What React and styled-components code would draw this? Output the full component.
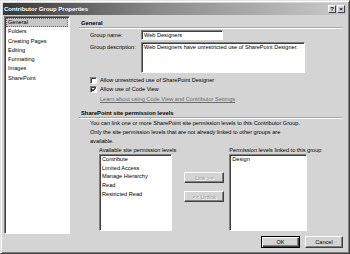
import React from 'react';
import styled, { createGlobalStyle } from 'styled-components';

const Global = createGlobalStyle`
  html, body { margin: 0; padding: 0; background: #d4d4d4; }
  body { font-family: "Liberation Sans", Arial, sans-serif; font-size: 5.6px; color: #000; }
  * { box-sizing: border-box; }
`;

const Window = styled.div`
  width: 350px;
  height: 254px;
  background: #d4d4d4;
  border: 1px solid;
  border-color: #e4e4e4 #404040 #404040 #e4e4e4;
  box-shadow: inset 1px 1px 0 #fff, inset -1px -1px 0 #808080;
  padding: 2px;
  display: flex;
  flex-direction: column;
  overflow: hidden;
`;

const TitleBar = styled.div`
  height: 12px;
  background: linear-gradient(to right, #383838 0%, #8a8a8a 45%, #cacaca 100%);
  display: flex;
  align-items: center;
  padding: 0 2px 0 1px;
  flex-shrink: 0;
`;

const Title = styled.div`
  flex: 1;
  color: #fff;
  font-weight: bold;
  font-size: 6px;
  line-height: 12px;
  white-space: nowrap;
`;

const CapButton = styled.div`
  width: 8px;
  height: 8px;
  margin-left: ${p => (p.$gap ? '1px' : '0')};
  background: #d4d4d4;
  border: 1px solid;
  border-color: #fff #404040 #404040 #fff;
  display: flex;
  align-items: center;
  justify-content: center;
  font-weight: bold;
  font-size: 6px;
  line-height: 6px;
`;

const Body = styled.div`
  display: flex;
  flex: 1;
  padding: 1px 0 0 1px;
  min-height: 0;
`;

const Nav = styled.div`
  width: 66px;
  height: 218px;
  background: #fff;
  border: 1px solid;
  border-color: #808080 #fff #fff #808080;
  box-shadow: inset 1px 1px 0 #404040;
  padding: 1px 1px 0 1px;
  flex-shrink: 0;
`;

const NavItem = styled.div`
  height: 9.3px;
  line-height: 9.3px;
  padding-left: 2px;
  white-space: nowrap;
  background: ${p => (p.$selected ? '#c6c6c6' : 'transparent')};
  outline: ${p => (p.$selected ? '1px dotted #666' : 'none')};
  outline-offset: -1px;
`;

const Panel = styled.div`
  flex: 1;
  margin-left: 9px;
  margin-right: 4px;
  display: flex;
  flex-direction: column;
`;

const Heading = styled.div`
  font-weight: bold;
  font-size: 5.8px;
  line-height: 8px;
  margin-top: ${p => p.$top}px;
  padding-left: 2px;
  border-bottom: 1px solid #a8a8a8;
  box-shadow: 0 1px 0 #fff;
`;

const FormRow = styled.div`
  display: flex;
  align-items: ${p => (p.$top ? 'flex-start' : 'center')};
  margin-top: 2px;
  padding-left: 11px;
`;

const Label = styled.div`
  width: 51px;
  line-height: 9px;
  white-space: nowrap;
  padding-top: ${p => (p.$top ? '1px' : '0')};
`;

const Field = styled.div`
  width: ${p => p.$w}px;
  height: ${p => p.$h}px;
  background: #fff;
  border: 1px solid;
  border-color: #808080 #fff #fff #808080;
  box-shadow: inset 1px 1px 0 #404040;
  padding: 0 2px;
  line-height: 8px;
  white-space: nowrap;
  overflow: hidden;
`;

const CheckRow = styled.div`
  display: flex;
  align-items: center;
  height: 8px;
  margin-top: ${p => p.$top}px;
  padding-left: 11px;
  white-space: nowrap;
`;

const Box = styled.div`
  width: 7px;
  height: 7px;
  margin-right: 3px;
  background: #fff;
  border: 1px solid;
  border-color: #808080 #fff #fff #808080;
  box-shadow: inset 1px 1px 0 #404040;
  display: flex;
  align-items: center;
  justify-content: center;
`;

const Link = styled.div`
  margin-top: 2px;
  padding-left: 21px;
  line-height: 8px;
  color: #6a6a6a;
  text-decoration: underline;
  white-space: nowrap;
`;

const Para = styled.div`
  margin-top: 1px;
  padding-left: 11px;
  line-height: 9px;
  white-space: nowrap;
`;

const Lists = styled.div`
  display: flex;
  padding-left: 20px;
`;

const ListCol = styled.div`
  display: flex;
  flex-direction: column;
`;

const ListLabel = styled.div`
  line-height: 8px;
  white-space: nowrap;
  height: 8px;
`;

const ListBox = styled.div`
  width: ${p => p.$w}px;
  height: 77px;
  background: #fff;
  border: 1px solid;
  border-color: #808080 #fff #fff #808080;
  box-shadow: inset 1px 1px 0 #404040;
  padding: 0 2px;
`;

const ListItem = styled.div`
  line-height: 8.7px;
  white-space: nowrap;
`;

const MidCol = styled.div`
  width: 53px;
  display: flex;
  flex-direction: column;
  align-items: flex-start;
  padding-top: 26px;
  padding-left: 8px;
  gap: 8px;
`;

const Button = styled.div`
  width: ${p => p.$w}px;
  height: ${p => p.$h}px;
  background: #d4d4d4;
  border: 1px solid;
  border-color: ${p => (p.$default ? '#000' : '#fff #404040 #404040 #fff')};
  box-shadow: ${p =>
    p.$default
      ? 'inset 1px 1px 0 #fff, inset -1px -1px 0 #404040, inset -2px -2px 0 #808080'
      : 'inset -1px -1px 0 #808080'};
  display: flex;
  align-items: center;
  justify-content: center;
  white-space: nowrap;
  color: ${p => (p.$disabled ? '#9a9a9a' : '#000')};
  text-shadow: ${p => (p.$disabled ? '1px 1px 0 #fff' : 'none')};
`;

const Footer = styled.div`
  display: flex;
  justify-content: flex-end;
  gap: 5px;
  padding: 2px 4px 3px 0;
  flex-shrink: 0;
`;

const Check = () => (
  <svg width="5" height="5" viewBox="0 0 5 5">
    <path d="M0.5 2.2 L2 3.7 L4.5 1" stroke="#000" strokeWidth="1.1" fill="none" />
  </svg>
);

const navItems = ['General', 'Folders', 'Creating Pages', 'Editing', 'Formatting', 'Images', 'SharePoint'];
const available = ['Contribute', 'Limited Access', 'Manage Hierarchy', 'Read', 'Restricted Read'];

export default function App() {
  return (
    <>
      <Global />
      <Window>
        <TitleBar>
          <Title>Contributor Group Properties</Title>
          <CapButton>?</CapButton>
          <CapButton $gap>×</CapButton>
        </TitleBar>
        <Body>
          <Nav>
            {navItems.map((n, i) => (
              <NavItem key={n} $selected={i === 0}>{n}</NavItem>
            ))}
          </Nav>
          <Panel>
            <Heading $top={3}>General</Heading>
            <FormRow>
              <Label>Group name:</Label>
              <Field $w={82} $h={10}>Web Designers</Field>
            </FormRow>
            <FormRow $top>
              <Label $top>Group description:</Label>
              <Field $w={164} $h={31}>Web Designers have unrestricted use of SharePoint Designer.</Field>
            </FormRow>
            <CheckRow $top={3}>
              <Box />
              <span>Allow unrestricted use of SharePoint Designer</span>
            </CheckRow>
            <CheckRow $top={1}>
              <Box><Check /></Box>
              <span>Allow use of Code View</span>
            </CheckRow>
            <Link>Learn about using Code View and Contributor Settings</Link>
            <Heading $top={6}>SharePoint site permission levels</Heading>
            <Para>
              You can link one or more SharePoint site permission levels to this Contributor Group.
              <br />
              Only the site permission levels that are not already linked to other groups are
              <br />
              available.
            </Para>
            <Lists>
              <ListCol>
                <ListLabel>Available site permission levels</ListLabel>
                <ListBox $w={73}>
                  {available.map(a => (
                    <ListItem key={a}>{a}</ListItem>
                  ))}
                </ListBox>
              </ListCol>
              <MidCol>
                <Button $w={40} $h={11} $disabled>Link &gt;&gt;</Button>
                <Button $w={40} $h={11} $disabled>&lt;&lt; Unlink</Button>
              </MidCol>
              <ListCol>
                <ListLabel>Permission levels linked to this group</ListLabel>
                <ListBox $w={78}>
                  <ListItem>Design</ListItem>
                </ListBox>
              </ListCol>
            </Lists>
          </Panel>
        </Body>
        <Footer>
          <Button $w={39} $h={12} $default>OK</Button>
          <Button $w={38} $h={12}>Cancel</Button>
        </Footer>
      </Window>
    </>
  );
}
